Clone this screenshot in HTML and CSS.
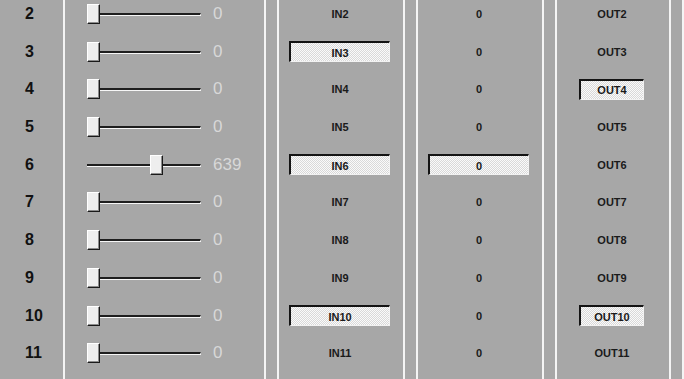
FILE: index.html
```html
<!DOCTYPE html>
<html lang="en">
<head>
  <meta charset="UTF-8" />
  <title>Channel Mixer</title>
  <link rel="stylesheet" href="styles.css">
</head>
<body>
  <div class="board">
    <!-- channel numbers -->
    <div class="col col-num">
      <div class="cell">2</div>
      <div class="cell">3</div>
      <div class="cell">4</div>
      <div class="cell">5</div>
      <div class="cell">6</div>
      <div class="cell">7</div>
      <div class="cell">8</div>
      <div class="cell">9</div>
      <div class="cell">10</div>
      <div class="cell">11</div>
    </div>

    <!-- level sliders, thumb offset = value / 1023 * 101 -->
    <div class="col col-slider panel">
      <div class="cell"><div class="slider"><span class="track"></span><span class="thumb" style="left:0px"></span></div><span class="level">0</span></div>
      <div class="cell"><div class="slider"><span class="track"></span><span class="thumb" style="left:0px"></span></div><span class="level">0</span></div>
      <div class="cell"><div class="slider"><span class="track"></span><span class="thumb" style="left:0px"></span></div><span class="level">0</span></div>
      <div class="cell"><div class="slider"><span class="track"></span><span class="thumb" style="left:0px"></span></div><span class="level">0</span></div>
      <div class="cell"><div class="slider"><span class="track"></span><span class="thumb" style="left:63px"></span></div><span class="level">639</span></div>
      <div class="cell"><div class="slider"><span class="track"></span><span class="thumb" style="left:0px"></span></div><span class="level">0</span></div>
      <div class="cell"><div class="slider"><span class="track"></span><span class="thumb" style="left:0px"></span></div><span class="level">0</span></div>
      <div class="cell"><div class="slider"><span class="track"></span><span class="thumb" style="left:0px"></span></div><span class="level">0</span></div>
      <div class="cell"><div class="slider"><span class="track"></span><span class="thumb" style="left:0px"></span></div><span class="level">0</span></div>
      <div class="cell"><div class="slider"><span class="track"></span><span class="thumb" style="left:0px"></span></div><span class="level">0</span></div>
    </div>

    <!-- inputs -->
    <div class="col col-in panel">
      <div class="cell"><span class="tag">IN2</span></div>
      <div class="cell"><span class="tag on">IN3</span></div>
      <div class="cell"><span class="tag">IN4</span></div>
      <div class="cell"><span class="tag">IN5</span></div>
      <div class="cell"><span class="tag on">IN6</span></div>
      <div class="cell"><span class="tag">IN7</span></div>
      <div class="cell"><span class="tag">IN8</span></div>
      <div class="cell"><span class="tag">IN9</span></div>
      <div class="cell"><span class="tag on">IN10</span></div>
      <div class="cell"><span class="tag">IN11</span></div>
    </div>

    <!-- values -->
    <div class="col col-val panel">
      <div class="cell"><span class="tag">0</span></div>
      <div class="cell"><span class="tag">0</span></div>
      <div class="cell"><span class="tag">0</span></div>
      <div class="cell"><span class="tag">0</span></div>
      <div class="cell"><span class="tag on">0</span></div>
      <div class="cell"><span class="tag">0</span></div>
      <div class="cell"><span class="tag">0</span></div>
      <div class="cell"><span class="tag">0</span></div>
      <div class="cell"><span class="tag">0</span></div>
      <div class="cell"><span class="tag">0</span></div>
    </div>

    <!-- outputs -->
    <div class="col col-out panel">
      <div class="cell"><span class="tag">OUT2</span></div>
      <div class="cell"><span class="tag">OUT3</span></div>
      <div class="cell"><span class="tag on">OUT4</span></div>
      <div class="cell"><span class="tag">OUT5</span></div>
      <div class="cell"><span class="tag">OUT6</span></div>
      <div class="cell"><span class="tag">OUT7</span></div>
      <div class="cell"><span class="tag">OUT8</span></div>
      <div class="cell"><span class="tag">OUT9</span></div>
      <div class="cell"><span class="tag on">OUT10</span></div>
      <div class="cell"><span class="tag">OUT11</span></div>
    </div>

    <div class="col col-rest"></div>
  </div>
</body>
</html>
```

FILE: styles.css
```css
* { box-sizing: border-box; }

body {
  margin: 0;
  padding: 0;
  background: #a7a7a7;
  font-family: "Liberation Sans", Arial, sans-serif;
  color: #151515;
  overflow: hidden;
}

.board {
  display: flex;
  gap: 11px;
  height: 379px;
}

.col {
  display: flex;
  flex-direction: column;
  flex: none;
}

.panel {
  border-left: 2px solid #f4f4f4;
  border-right: 2px solid #f4f4f4;
}

.cell {
  height: 37.7px;
  padding-bottom: 9.7px;
  display: flex;
  align-items: center;
  flex: none;
}

/* numbers */
.col-num {
  width: 63px;
  margin-right: -11px;
  padding-left: 25px;
  font-size: 16px;
  font-weight: bold;
  color: #111;
}

/* sliders */
.col-slider {
  width: 203px;
}

.slider {
  position: relative;
  width: 114px;
  height: 20px;
  margin-left: 22px;
}

.track {
  display: block;
  margin-top: 9px;
  height: 3px;
  border-top: 2px solid #1e1e1e;
  border-bottom: 1px solid #f6f6f6;
  border-right: 1px solid #f6f6f6;
}

.thumb {
  position: absolute;
  top: 0;
  width: 13px;
  height: 20px;
  background: #eeeeee;
  border-left: 1px solid #fff;
  border-top: 1px solid #fff;
  border-right: 1px solid #1a1a1a;
  border-bottom: 1px solid #1a1a1a;
  box-shadow: inset -1px -1px 0 #8c8c8c;
}

.level {
  margin-left: 12px;
  font-size: 17px;
  color: #d8d8d8;
}

/* tags */
.col-in, .col-val {
  width: 128px;
}

.col-out {
  width: 116px;
}

.col-in .cell, .col-val .cell, .col-out .cell {
  justify-content: center;
  padding-right: 2px;
}

.tag {
  font-size: 11px;
  font-weight: bold;
  color: #1a1a1a;
}

.tag.on {
  display: flex;
  align-items: center;
  justify-content: center;
  width: 101px;
  height: 21px;
  padding-top: 1px;
  margin-left: -1px;
  border-top: 2px solid #141414;
  border-left: 2px solid #141414;
  border-right: 1px solid #f2f2f2;
  border-bottom: 1px solid #f2f2f2;
  background-color: #f0f0f0;
  background-image: repeating-conic-gradient(#d9d9d9 0 25%, #fafafa 0 50%);
  background-size: 2px 2px;
}

.col-out .tag.on {
  width: 65px;
}

.col-rest {
  flex: 1;
  border-left: 2px solid #f4f4f4;
}
```
